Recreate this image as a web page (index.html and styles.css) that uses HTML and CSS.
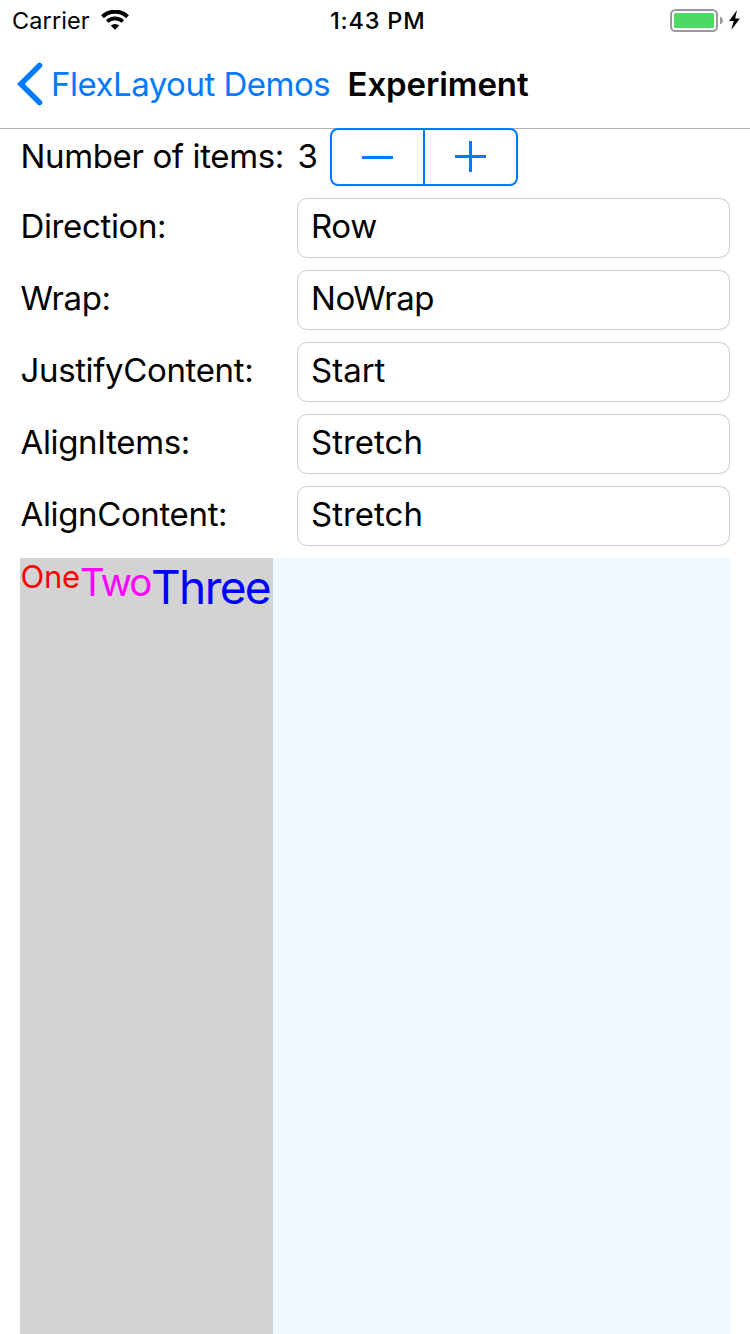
FILE: index.html
```
<!DOCTYPE html>
<html lang="en">
<head>
<meta charset="utf-8">
<title>Experiment</title>
<link rel="stylesheet" href="styles.css">
</head>
<body>
<div class="screen">
  <header class="status">
    <div class="status-left">
      <span class="carrier">Carrier</span>
      <svg class="wifi" width="28" height="20" viewBox="0 0 28 20">
        <path d="M1.5 6.7A18 18 0 0 1 26.5 6.7" fill="none" stroke="#000" stroke-width="4"/>
        <path d="M6.2 11.5A11.3 11.3 0 0 1 21.8 11.5" fill="none" stroke="#000" stroke-width="3.6"/>
        <path d="M9.8 15.6A6.2 6.2 0 0 1 18.2 15.6L14 19.8Z"/>
      </svg>
    </div>
    <span class="time">1:43 PM</span>
    <svg class="battery" width="72" height="24" viewBox="0 0 72 24">
      <rect x="1" y="1" width="46" height="21" rx="4.5" fill="none" stroke="#999" stroke-width="2"/>
      <rect x="4" y="4" width="40" height="15" rx="1.5" fill="#4cd964"/>
      <path d="M50 7.5Q53 9 53 11.5T50 15.5Z" fill="#999"/>
      <path d="M67 1L59 12H63.7L61.2 21L70 9.5H65.2Z"/>
    </svg>
  </header>
  <nav class="nav">
    <svg class="chevron" width="26" height="44" viewBox="0 0 26 44">
      <path d="M22.5 3.5L3.8 22L22.5 40.5" fill="none" stroke="#007aff" stroke-width="5.5" stroke-linecap="round"/>
    </svg>
    <span class="back">FlexLayout Demos</span>
    <span class="title">Experiment</span>
  </nav>
  <main class="content">
    <div class="count">
      <span class="label count-label">Number of items:</span>
      <span class="label count-value">3</span>
      <div class="stepper">
        <div class="step"><svg width="31" height="31" viewBox="0 0 31 31"><path d="M0 16.5H31" stroke="#007aff" stroke-width="3"/></svg></div>
        <div class="step"><svg width="31" height="31" viewBox="0 0 31 31"><path d="M0 15.5H31M15.5 0V31" stroke="#007aff" stroke-width="3"/></svg></div>
      </div>
    </div>
    <div class="row"><span class="label">Direction:</span><div class="field tight">Row</div></div>
    <div class="row"><span class="label">Wrap:</span><div class="field tight">NoWrap</div></div>
    <div class="row"><span class="label">JustifyContent:</span><div class="field">Start</div></div>
    <div class="row"><span class="label">AlignItems:</span><div class="field">Stretch</div></div>
    <div class="row"><span class="label">AlignContent:</span><div class="field">Stretch</div></div>
    <div class="flex-demo">
      <div class="item one">One</div>
      <div class="item two">Two</div>
      <div class="item three">Three</div>
    </div>
  </main>
</div>
</body>
</html>
```
FILE: styles.css
```
* { box-sizing: border-box; }
body { margin: 0; background: #fff; color: #000; font-family: Inter, "Liberation Sans", sans-serif; }
svg { display: block; flex: none; }
.screen { width: 750px; height: 1334px; display: flex; flex-direction: column; overflow: hidden; }
.status { height: 40px; flex: none; display: grid; grid-template-columns: 330px 340px 80px; line-height: 41px; font-size: 23.5px; white-space: nowrap; }
.status-left { display: flex; padding-left: 12px; }
.carrier { width: 89px; letter-spacing: 0.1px; }
.wifi { margin-top: 10px; }
.time { font-weight: 500; letter-spacing: 0.8px; }
.battery { margin-top: 9px; }
.nav { height: 89px; flex: none; display: flex; padding-left: 17px; border-bottom: 1px solid #b2b2b2; line-height: 88px; font-size: 33px; white-space: nowrap; }
.chevron { margin-top: 22px; }
.back { color: #007aff; width: 297px; padding-left: 8px; letter-spacing: -0.5px; }
.title { margin-left: 7.5px; font-weight: 600; letter-spacing: -0.1px; }
.content { flex: 1; display: flex; flex-direction: column; gap: 12px; padding: 0 20px; font-size: 33px; white-space: nowrap; margin-top: -1px; }
.label { padding-left: 0.5px; letter-spacing: -0.36px; }
.count { height: 58px; display: flex; line-height: 56px; }
.count-label { width: 277px; }
.count-value { width: 33px; }
.stepper { width: 188px; height: 58px; border: 2px solid #007aff; border-radius: 8px; display: grid; grid-template-columns: 91px 93px; }
.step { display: flex; justify-content: center; padding-top: 11px; }
.step + .step { border-left: 2px solid #007aff; }
.row { height: 60px; flex: none; display: grid; grid-template-columns: 277px 433px; line-height: 57px; }
.field { border: 1px solid #ccc; border-radius: 10px; padding-left: 13px; line-height: 55px; }
.tight { letter-spacing: -0.4px; }
.flex-demo { flex: 1; display: flex; background: #eff7ff; }
.item { background: #d3d3d3; }
.one { color: red; width: 60px; font-size: 31px; line-height: 38px; padding-left: 0.5px; letter-spacing: -0.3px; }
.two { color: magenta; width: 72px; font-size: 38.5px; line-height: 49px; letter-spacing: -2px; }
.three { color: blue; width: 121px; font-size: 46px; line-height: 59px; margin-left: -1px; width: 122px; letter-spacing: -1.6px; }
```
